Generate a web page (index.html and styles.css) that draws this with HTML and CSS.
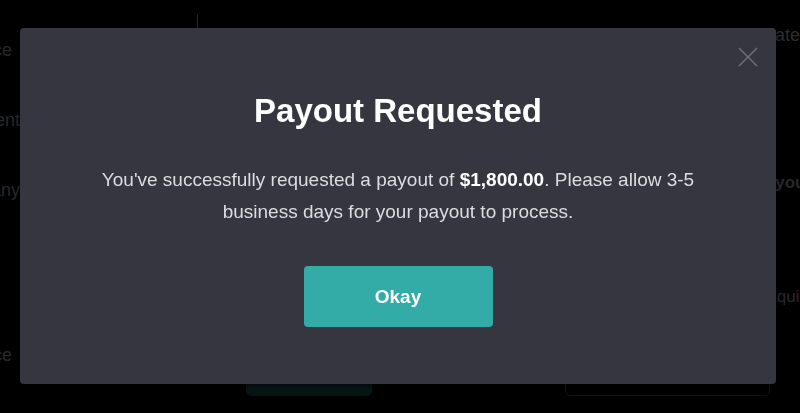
FILE: index.html
```html
<!DOCTYPE html>
<html lang="en">
<head>
<meta charset="utf-8">
<title>Payout Requested</title>
<link rel="stylesheet" href="styles.css">
</head>
<body>
<div class="page">
  <aside class="side">
    <div class="side-item s1">Balance</div>
    <div class="side-item s2">Payment</div>
    <div class="side-item s3">Company</div>
    <div class="side-item s4">Balance</div>
  </aside>
  <main class="main">
    <div class="main-top">
      <span class="divider"></span>
      <p class="intro">Your account is now connected and payout details are updated</p>
    </div>
    <p class="strong-line">Once you</p>
    <p class="req">Required</p>
    <div class="main-btns">
      <span class="ghost-btn teal"></span>
      <span class="ghost-btn outline"></span>
    </div>
  </main>
</div>

<div class="overlay">
  <div class="modal" role="dialog" aria-labelledby="t">
    <button class="close" aria-label="Close">
      <svg width="20" height="20" viewBox="0 0 20 20"><path d="M1 1L19 19M19 1L1 19" stroke="#6c6d77" stroke-width="1.6" fill="none"/></svg>
    </button>
    <h1 id="t" class="title">Payout Requested</h1>
    <p class="msg">You've successfully requested a payout of <b>$1,800.00</b>. Please allow 3-5<br>business days for your payout to process.</p>
    <button class="okay">Okay</button>
  </div>
</div>
</body>
</html>
```

FILE: styles.css
```css
* { box-sizing: border-box; }
html, body {
  margin: 0;
  height: 100%;
  background: #000;
  overflow: hidden;
  font-family: "Liberation Sans", Arial, sans-serif;
}
.page {
  display: flex;
  height: 413px;
  margin-left: -58px;
}
.side {
  flex: 0 0 255px;
  display: flex;
  flex-direction: column;
  padding-top: 38px;
}
.side-item {
  color: #28282b;
  font-size: 18px;
  line-height: 24px;
  white-space: nowrap;
}
.s1 { margin-left: 5px; }
.s2 { margin-top: 46px; margin-left: 7px; }
.s3 { margin-top: 46px; margin-left: 1px; }
.s4 { margin-top: 141px; margin-left: 5px; }
.main {
  flex: 1 1 auto;
  min-width: 0;
  display: flex;
  flex-direction: column;
}
.main-top {
  display: flex;
  align-items: flex-start;
  height: 40px;
  padding-top: 14px;
}
.divider {
  flex: 0 0 1px;
  height: 16px;
  background: #1a2a2a;
}
.intro {
  flex: 1 1 auto;
  min-width: 0;
  margin: 11px -10px 0 48px;
  color: #2c2c2f;
  font-size: 18px;
  line-height: 20px;
  white-space: nowrap;
  text-align: right;
  direction: rtl;
}
.intro { unicode-bidi: plaintext; }
.strong-line {
  margin: 133px 0 0 531px;
  color: #28282b;
  font-weight: bold;
  font-size: 17px;
  line-height: 20px;
  white-space: nowrap;
}
.req {
  margin: 94px 0 0 558px;
  color: #28282b;
  font-size: 17px;
  line-height: 20px;
  white-space: nowrap;
}
.main-btns {
  display: flex;
  gap: 193px;
  margin-top: 49px;
  padding-left: 49px;
}
.ghost-btn {
  display: block;
  flex: 0 0 126px;
  height: 40px;
  border-radius: 5px;
}
.ghost-btn.teal { background: #061414; }
.ghost-btn.outline {
  flex-basis: 205px;
  border: 1px solid #141417;
}

.overlay {
  position: fixed;
  inset: 0;
  display: flex;
  align-items: flex-start;
  padding: 28px 24px 0 20px;
}
.modal {
  position: relative;
  width: 756px;
  height: 356px;
  background: #363641;
  border-radius: 4px;
  display: flex;
  flex-direction: column;
  align-items: center;
  padding-top: 64px;
  box-shadow: 0 2px 4px rgba(0,0,0,0.5);
}
.close {
  position: absolute;
  top: 19px;
  right: 18px;
  width: 20px;
  height: 20px;
  padding: 0;
  border: 0;
  background: none;
  display: flex;
}
.title {
  margin: 0;
  color: #fff;
  font-size: 33px;
  line-height: 38px;
  font-weight: bold;
}
.msg {
  margin: 34px 0 0;
  color: #dcdce0;
  font-size: 19px;
  line-height: 32px;
  text-align: center;
}
.msg b { color: #fff; }
.okay {
  margin-top: 38px;
  width: 189px;
  height: 61px;
  border: 0;
  border-radius: 4px;
  background: #33aba6;
  color: #fff;
  font-family: "Liberation Sans", Arial, sans-serif;
  font-weight: bold;
  font-size: 19px;
}
```
